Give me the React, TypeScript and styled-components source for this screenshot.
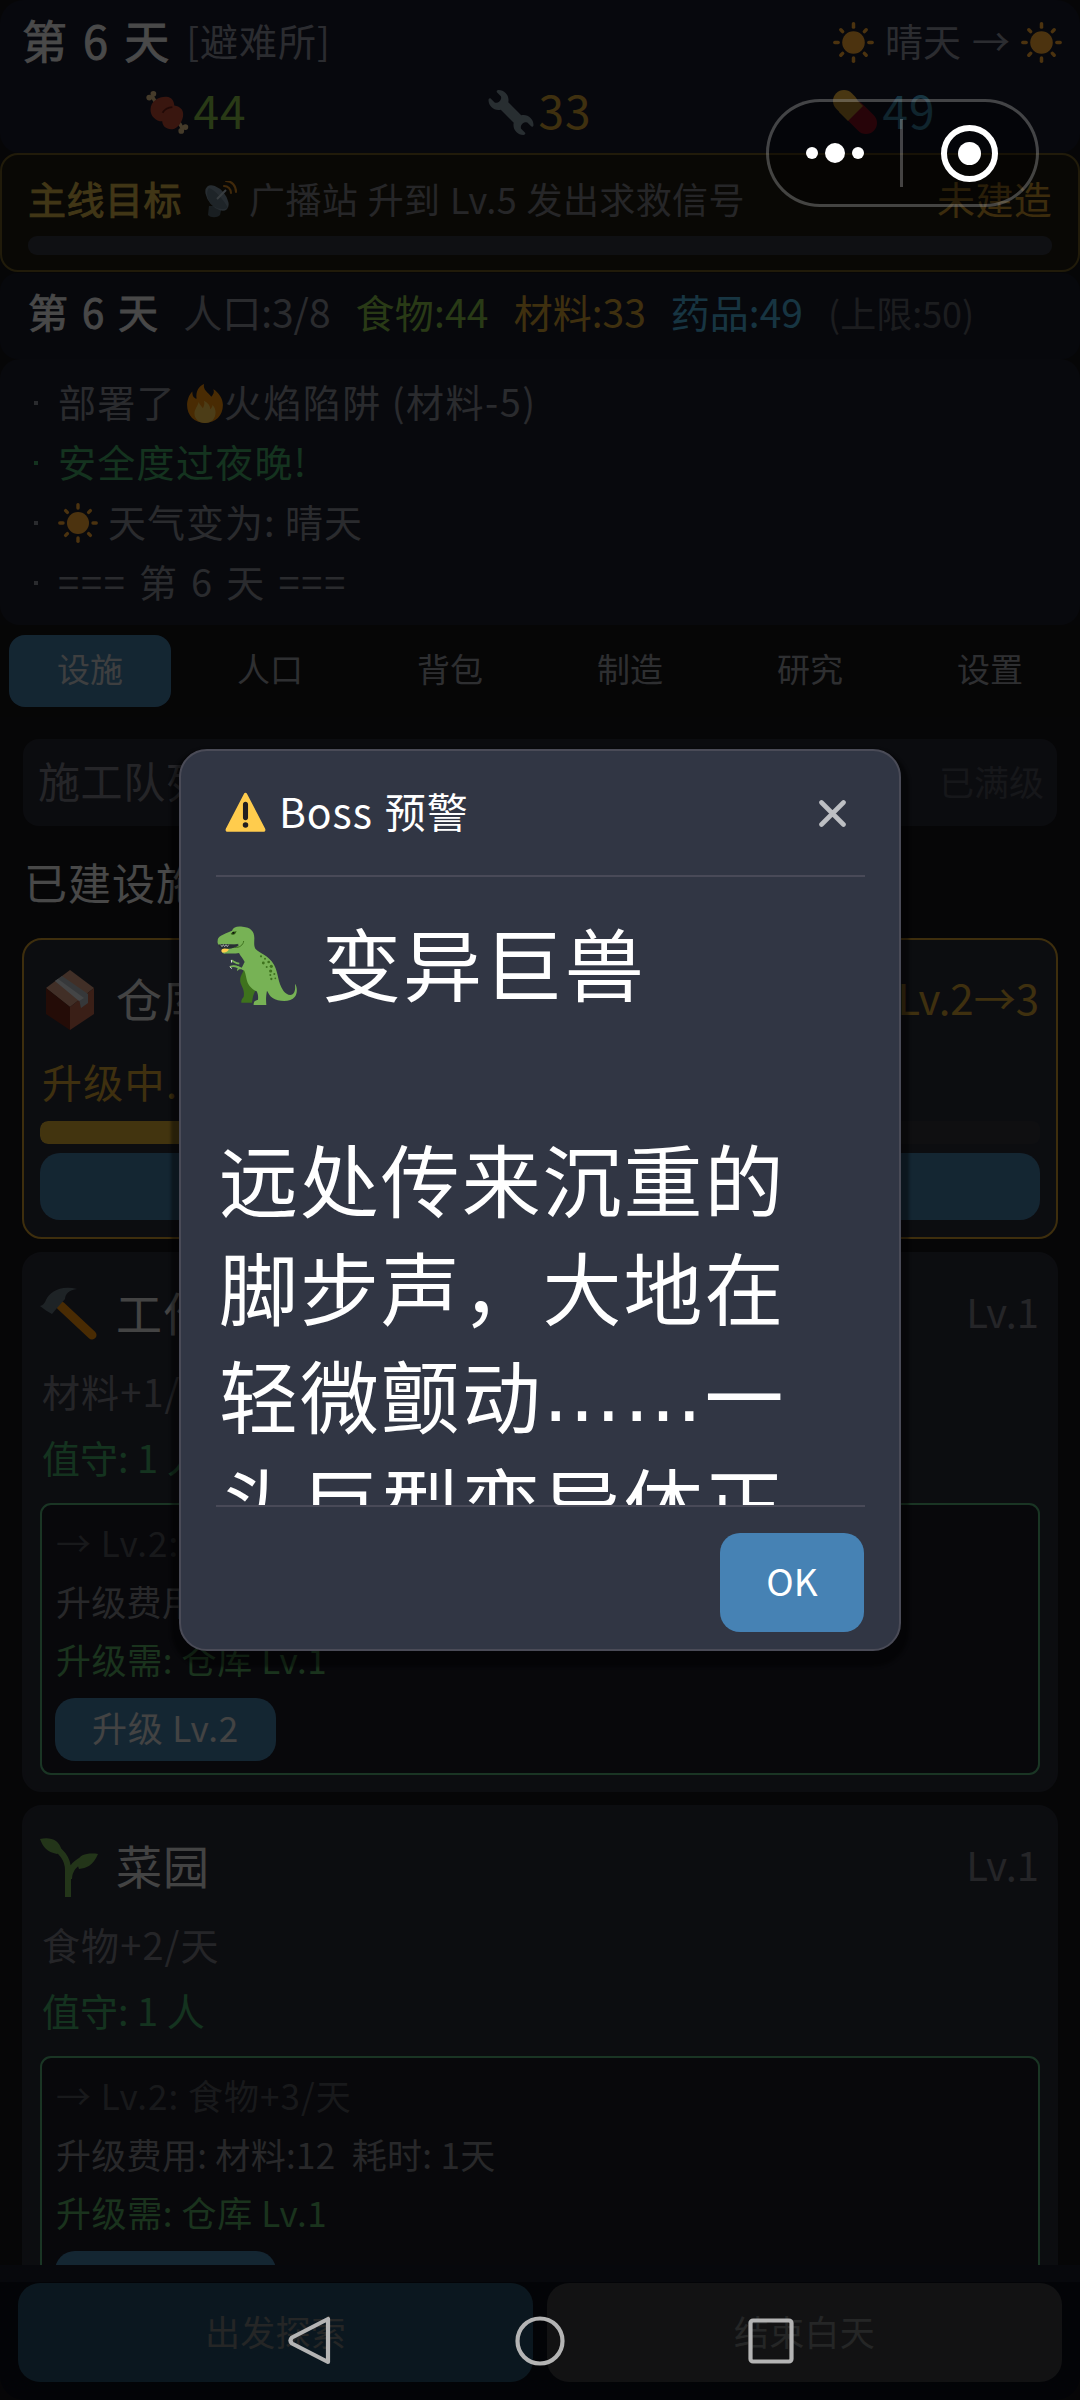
import React from "react";
import styled, { createGlobalStyle } from "styled-components";

const GlobalStyle = createGlobalStyle`
  * { box-sizing: border-box; }
  html, body { margin: 0; padding: 0; background: #000; }
  body { font-family: "Noto Sans CJK SC", "Noto Sans", sans-serif; }
`;

const Screen = styled.div`
  position: relative;
  width: 1080px;
  height: 2400px;
  overflow: hidden;
  display: flex;
  flex-direction: column;
  background: #161619;
`;

type TextProps = { $size?: number; $color?: string; $ls?: number; $ws?: number; $strong?: boolean };

const Text = styled.span<TextProps>`
  padding-bottom: 0.13em;
  font-size: ${(p) => p.$size ?? 38}px;
  color: ${(p) => p.$color ?? "#8c8f99"};
  letter-spacing: ${(p) => p.$ls ?? 0}px;
  word-spacing: ${(p) => p.$ws ?? 0}px;
  -webkit-text-stroke: ${(p) => (p.$strong ? "0.9px currentColor" : "0")};
  line-height: 1;
  white-space: pre;
`;

/* ---------- top bars ---------- */

const Header = styled.header`
  height: 153px;
  padding: 12px 18px 0 22px;
  border-radius: 24px 24px 20px 20px;
  background: #191c2d;
`;

const HeaderTop = styled.div`
  display: flex;
  align-items: center;
  justify-content: space-between;
  height: 60px;
`;

const Group = styled.div<{ $gap?: number; $ml?: number }>`
  display: flex;
  align-items: center;
  gap: ${(p) => p.$gap ?? 0}px;
  margin-left: ${(p) => p.$ml ?? 0}px;
`;

const Resources = styled.div`
  display: grid;
  grid-template-columns: repeat(3, 1fr);
  align-items: center;
  justify-items: center;
  height: 80px;
  padding: 0 6px 0 2px;
`;

const Goal = styled.section`
  display: flex;
  flex-direction: column;
  height: 119px;
  padding: 22px 26px 0 26px;
  border: 2px solid #6e5d22;
  border-radius: 18px;
  background: #211d12;
`;

const GoalRow = styled.div`
  display: flex;
  align-items: center;
  justify-content: space-between;
  height: 46px;
`;

const GoalTrack = styled.div`
  height: 19px;
  margin-top: 13px;
  border-radius: 9px;
  background: #333641;
`;

const StatusPanel = styled.section`
  display: flex;
  align-items: center;
  gap: 25px;
  height: 86px;
  margin-top: 1px;
  padding: 0 28px 4px;
  border-radius: 18px;
  background: #191b2b;
`;

const LogPanel = styled.section`
  height: 266px;
  padding: 14px 32px 0 32px;
  border-radius: 20px;
  background: #1d1f2c;
`;

const LogLine = styled.div`
  display: flex;
  align-items: center;
  height: 60px;
`;

const Bullet = styled.span<{ $color: string }>`
  flex: 0 0 4px;
  height: 4px;
  margin: 0 20px 0 2px;
  background: ${(p) => p.$color};
`;

/* ---------- tabs ---------- */

const Tabs = styled.nav`
  display: flex;
  height: 92px;
  padding-top: 10px;
  background: #141417;
`;

const Tab = styled.div<{ $active?: boolean }>`
  flex: 0 0 162px;
  height: 72px;
  margin: 0 9px;
  display: flex;
  align-items: center;
  justify-content: center;
  border-radius: 16px;
  background: ${(p) => (p.$active ? "#457fa9" : "transparent")};
`;

/* ---------- facilities ---------- */

const List = styled.main`
  height: 1548px;
  padding: 22px 22px 0;
  overflow: hidden;
`;

const QueueRow = styled.div`
  display: flex;
  align-items: center;
  justify-content: space-between;
  height: 87px;
  margin: 0 1px;
  padding: 0 13px 0 15px;
  border-radius: 16px;
  background: #272934;
`;

const SectionTitle = styled.div`
  display: flex;
  align-items: center;
  height: 112px;
  padding: 4px 0 0 2px;
`;

const Card = styled.section<{ $busy?: boolean }>`
  display: flex;
  flex-direction: column;
  height: ${(p) => (p.$busy ? 301 : 540)}px;
  margin-bottom: 13px;
  padding: 16px 16px 0;
  border: 2px solid ${(p) => (p.$busy ? "#cf9b2c" : "#2a2c38")};
  border-radius: 20px;
  background: #2a2c38;
`;

const CardHead = styled.div`
  display: flex;
  align-items: center;
  justify-content: space-between;
  flex: 0 0 88px;
  padding: 0 1px 0 0;
`;

const CardLine = styled.div<{ $h: number }>`
  display: flex;
  align-items: center;
  flex: 0 0 ${(p) => p.$h}px;
  padding: 4px 0 0 2px;
`;

const Track = styled.div`
  flex: 0 0 23px;
  margin: 1px 0 9px;
  border-radius: 8px;
  background: #32343b;
  overflow: hidden;
`;

const Fill = styled.div`
  height: 100%;
  border-radius: 8px;
  background: #dcae34;
`;

const WideButton = styled.div`
  flex: 0 0 67px;
  border-radius: 20px;
  background: #457fa9;
`;

const UpgradeBox = styled.div`
  flex: 0 0 272px;
  margin-top: 13px;
  padding: 10px 13px 0;
  border: 2px solid #57b37a;
  border-radius: 11px;
  background: #1b1c25;
`;

const UpgradeLine = styled.div`
  display: flex;
  align-items: center;
  height: 58.5px;
  padding-left: 1px;
`;

const SmallButton = styled.div`
  display: flex;
  align-items: center;
  justify-content: center;
  width: 221px;
  height: 63px;
  margin-top: 7px;
  border-radius: 20px;
  background: #457fa9;
`;

/* ---------- footer ---------- */

const Footer = styled.footer`
  display: flex;
  gap: 14px;
  height: 135px;
  padding: 18px 18px 0;
  border-radius: 0 0 24px 24px;
  background: linear-gradient(#191b2b 0 17px, #0c0e18 17px);
`;

const FooterButton = styled.div<{ $bg: string }>`
  flex: 1;
  height: 99px;
  display: flex;
  align-items: center;
  justify-content: center;
  border-radius: 22px;
  background: ${(p) => p.$bg};
`;

/* ---------- overlays ---------- */

const Mask = styled.div`
  position: absolute;
  inset: 0;
  display: flex;
  align-items: center;
  justify-content: center;
  background: rgba(0, 0, 0, 0.7);
`;

const Modal = styled.div`
  display: flex;
  flex-direction: column;
  width: 722px;
  height: 902px;
  padding: 0 34px 0 35px;
  border: 2px solid #4a4b57;
  border-radius: 28px;
  background: #313644;
  box-shadow: 0 8px 3px 8px rgba(0, 0, 0, 0.4);
`;

const ModalHead = styled.div`
  display: flex;
  align-items: center;
  justify-content: space-between;
  flex: 0 0 126px;
  padding: 0 19px 0 9px;
  border-bottom: 2px solid #494a58;
`;

const ModalBody = styled.div`
  flex: 0 0 628px;
  padding: 31px 0 0 3px;
  overflow: hidden;
`;

const BodyLine = styled.div`
  display: flex;
  align-items: center;
  height: 108px;
  font-size: 79px;
  letter-spacing: 1.9px;
  line-height: 108px;
  color: #fff;
  white-space: nowrap;
`;

const Ellipsis = styled.span`
  font-family: "DejaVu Sans", sans-serif;
`;

const ModalFoot = styled.div`
  display: flex;
  justify-content: flex-end;
  flex: 1;
  padding: 26px 1px 0 0;
  border-top: 2px solid #494a58;
`;

const OkButton = styled.div`
  display: flex;
  align-items: center;
  justify-content: center;
  width: 144px;
  height: 99px;
  border-radius: 20px;
  background: #4682b4;
`;

const Capsule = styled.div`
  position: absolute;
  top: 99px;
  left: 766px;
  width: 273px;
  height: 108px;
  display: flex;
  align-items: center;
  border: 3px solid rgba(255, 255, 255, 0.25);
  border-radius: 54px;
  background: rgba(0, 0, 0, 0.3);
`;

const CapsuleHalf = styled.div<{ $w: number }>`
  display: flex;
  align-items: center;
  justify-content: center;
  width: ${(p) => p.$w}px;
  gap: 7px;
`;

const Dot = styled.i<{ $d: number }>`
  width: ${(p) => p.$d}px;
  height: ${(p) => p.$d}px;
  border-radius: 50%;
  background: #fff;
`;

const CapsuleRule = styled.i`
  width: 3px;
  height: 68px;
  background: rgba(255, 255, 255, 0.25);
`;

const Ring = styled.div`
  display: flex;
  align-items: center;
  justify-content: center;
  width: 57px;
  height: 57px;
  border: 6px solid #fff;
  border-radius: 50%;
`;

const SystemNav = styled.div`
  position: absolute;
  left: 0;
  right: 0;
  bottom: 34px;
  height: 51px;
  display: flex;
  align-items: center;
  justify-content: center;
  gap: 183px;
`;

/* ---------- drawings ---------- */

type IconProps = { size: number };

const Sun = ({ size }: IconProps) => (
  <svg width={size} height={size} viewBox="0 0 40 40">
    <circle cx="20" cy="20" r="11" fill="#ffac33" />
    {[0, 45, 90, 135, 180, 225, 270, 315].map((a) => (
      <line key={a} x1="20" y1={a % 90 ? 2.5 : 1.8} x2="20" y2={a % 90 ? 5 : 5} stroke="#ffac33" strokeWidth="3.4" strokeLinecap="round" transform={`rotate(${a} 20 20)`} />
    ))}
  </svg>
);

const Meat = () => (
  <svg width="44" height="45" viewBox="12 12 136 142">
    <g stroke="#e8c78d" strokeWidth="11" strokeLinecap="round">
      <path d="M34 34 48 56M120 118l9 16" />
    </g>
    <g fill="#e8c78d">
      <circle cx="24" cy="36" r="9" /><circle cx="37" cy="24" r="9" /><circle cx="125" cy="141" r="9" /><circle cx="138" cy="129" r="9" />
    </g>
    <path fill="#bf4a34" d="M28 74C28 46 56 32 78 33c18 1 24 14 25 28 18 3 28 12 28 28 0 20-16 44-34 47-18 2-32-10-32-25C44 110 28 94 28 74z" />
    <path d="M66 84c8-14 18-17 31-18" fill="none" stroke="#6d1e16" strokeWidth="6" />
  </svg>
);

const Wrench = () => (
  <svg width="46" height="45" viewBox="0 0 36 36">
    <path fill="#8899a6" d="M27.989 19.977c-.622 0-1.225.078-1.806.213L15.811 9.818c.134-.581.212-1.184.212-1.806C16.023 3.587 12.436 0 8.012 0 7.11 0 5.91.916 6.909 1.915l2.997 2.997s.999 1.998-.999 3.995-3.996.998-3.996.998L1.915 6.909C.916 5.91 0 7.105 0 8.012c0 4.425 3.587 8.012 8.012 8.012.622 0 1.225-.078 1.806-.212l10.371 10.371c-.135.581-.213 1.184-.213 1.806 0 4.425 3.588 8.011 8.012 8.011.901 0 2.101-.916 1.102-1.915l-2.997-2.997s-.999-1.998.999-3.995 3.995-.999 3.995-.999l2.997 2.997c1 .999 1.916-.196 1.916-1.102 0-4.425-3.587-8.012-8.011-8.012z" />
  </svg>
);

const Pill = () => (
  <svg width="46" height="45" viewBox="0 0 46 45">
    <path d="M34 33 23 22" stroke="#be1931" strokeWidth="22" strokeLinecap="round" />
    <path d="M12 11l3 3" stroke="#f4b93f" strokeWidth="22" strokeLinecap="round" />
    <path d="m22 7 9 9-15 15-9-9z" fill="#f4b93f" />
  </svg>
);

const Dish = () => (
  <svg width="33" height="37" viewBox="0 0 33 37">
    <path d="M5 25h13l-2 9c-3 3-9 3-12 0z" fill="#546570" />
    <ellipse cx="13" cy="17" rx="8.5" ry="15" transform="rotate(-40 13 17)" fill="#8195a3" />
    <path d="M5 7c6 2 15 12 19 20-8 3-16-1-19-7S3 9 5 7z" fill="#657886" />
    <path d="m13 18 9-9" stroke="#bccbd6" strokeWidth="2" />
    <path d="M20 5c4 0 7 3 7 7M22 0c6 0 10 5 10 11" fill="none" stroke="#d98a24" strokeWidth="2" strokeLinecap="round" />
  </svg>
);

const Fire = () => (
  <svg width="38" height="39" viewBox="0 0 36 37">
    <path fill="#f4900c" d="M35 20c0 10-7 17-17 17S1 30 1 20c0-5 2-10 5-13 0 4 1 6 4 7-1-7 2-12 7-14-1 6 4 8 7 12 2-2 3-4 2-7 5 3 9 9 9 15z" />
    <path fill="#ffcc4d" d="M28 27c0 6-4 10-10 10S8 33 8 28c0-4 3-7 4-11 1 3 3 4 4 6 1-2 2-4 1-7 4 2 6 5 6 8 1-1 2-2 2-4 2 2 3 4 3 7z" />
  </svg>
);

const Package = () => (
  <svg width="48" height="60" viewBox="0 0 48 60">
    <path d="M24 0 48 18 24 37 0 18z" fill="#d99e82" />
    <path d="M0 18 24 37v23L0 44z" fill="#7a2a18" />
    <path d="M48 18 24 37v23l24-16z" fill="#c1694f" />
    <path d="M9 11 16 6l26 18v9l-7 5-2-9z" fill="#b4bcc2" />
    <path d="m9 11 3-2 26 19-5 3z" fill="#e3e8eb" />
  </svg>
);

const Hammer = () => (
  <svg width="58" height="54" viewBox="0 0 58 54">
    <path d="m21 19 31 29" stroke="#f4900c" strokeWidth="9" strokeLinecap="round" />
    <path d="M0 19c2 0 5-3 6-6C10 5 20-2 37 2c-8 1-12 5-12 10l-8 9-5 6c-4-2-8-5-12-8z" fill="#66757f" />
  </svg>
);

const Sprout = () => (
  <svg width="58" height="59" viewBox="0 0 58 59">
    <path d="M28 59V32C28 20 20 12 13 9M29 41c0-9 6-16 13-19" fill="none" stroke="#77b255" strokeWidth="6" />
    <path d="M0 1c10-2 19 0 22 12l-5 3C7 14 3 9 0 1zM58 16c-8-1-19-1-21 9l2 6c7-1 14-3 19-15z" fill="#77b255" />
  </svg>
);

const Warning = () => (
  <svg width="41" height="41" viewBox="0 0 36 36">
    <path fill="#ffcc4d" d="M2.653 35C.811 35-.001 33.662.847 32.027L16.456 1.972c.849-1.635 2.238-1.635 3.087 0l15.609 30.056c.85 1.634.037 2.972-1.805 2.972H2.653z" />
    <path fill="#231f20" d="M15.583 28.953a2.418 2.418 0 0 1 4.837 0 2.418 2.418 0 0 1-4.837 0zm.186-18.293c0-1.302.961-2.108 2.232-2.108 1.241 0 2.233.837 2.233 2.108v11.938c0 1.271-.992 2.108-2.233 2.108-1.271 0-2.232-.807-2.232-2.108V10.66z" />
  </svg>
);

const TRexSvg = styled.svg`
  flex: none;
  margin: 7px 25px 0 -2px;
`;

const TRex = () => (
  <TRexSvg width="80" height="80" viewBox="23 24 240 240">
    <path fill="#3e721d" d="M104 150c-2 18-14 22-11 42 2 12 14 22 10 44-4 6-8 9-7 18h32c3-20 4-28 14-40z" />
    <path fill="#77b255" d="M25 68c0-13 12-17 43-30 4-12 16-14 32-12 24 2 35 14 35 34 0 12-2 22 3 32 14 14 40 20 56 48 14 26 10 50 28 78 10 14 27 18 33 4 4-9 2-17 2-25 8 12 7 30-1 40-12 17-50 14-66 3-9-6-12-14-17-22-2 12-4 20-2 43h-38c-1-9 4-14 13-16 1-9 0-18-4-25-14-6-25-18-29-32-3-10-3-19-8-30-6-3-12-6-17-3-4 3-3 5-3 5-3-4-2-8 1-10-8-4-15-4-22-3 4-5 13-6 24-2l9 4c4-5 5-11 9-17-4-9-12-17-17-27-16 3-34 0-44 2-9-1-10-12-2-16 16 0 38 1 46-11-20 2-40-4-58 1-6-1-7-7-6-13z" />
    <path fill="#292f33" d="M28 80c14-3 36 3 59-3-6 13-24 15-47 16-8-2-12-7-12-13z" />
    <path fill="#ffcc4d" d="M38 94c4-4 12-3 20-1 0 8-12 12-20 10-3-3-2-6 0-9z" />
    <path d="M76 88c14 2 26-7 27-19" fill="none" stroke="#3e721d" strokeWidth="3" />
    <path d="m34 80 4 6 4-6 4 6 4-6 4 6 4-6" fill="none" stroke="#fff" strokeWidth="1.6" />
    <path d="M64 48c4-6 12-8 18-8l-5 8c-4 3-10 2-13 0z" fill="#2b5413" />
    <circle cx="72" cy="44" r="3" fill="#111" />
    <path d="M66 127c8 3 13 9 24 10M62 146c12-4 20-2 30 5" fill="none" stroke="#77b255" strokeWidth="5" />
    <path d="m66 126 1 8m-5 12 5 6" stroke="#ddd" strokeWidth="3" />
    <g fill="#3e721d">
      <circle cx="155" cy="115" r="3.2" /><circle cx="167" cy="122" r="3" /><circle cx="162" cy="135" r="4.2" /><circle cx="178" cy="132" r="4" />
      <circle cx="186" cy="145" r="4.8" /><circle cx="172" cy="147" r="3" /><circle cx="184" cy="159" r="4.8" /><circle cx="195" cy="168" r="3" />
      <circle cx="183" cy="171" r="3" /><circle cx="186" cy="183" r="3.4" /><circle cx="198" cy="181" r="2.6" />
    </g>
  </TRexSvg>
);

const Close = () => (
  <svg width="27" height="27" viewBox="0 0 27 27">
    <path d="m2.5 2.5 22 22m0-22-22 22" stroke="#bdbfc3" strokeWidth="4.6" strokeLinecap="round" />
  </svg>
);

/* ---------- data ---------- */

const GREEN = "#58aa62";
const LOG_GREEN = "#45aa68";
const GOLD = "#d3a233";
const tabs = ["设施", "人口", "背包", "制造", "研究", "设置"];

type Facility = { icon: React.ReactNode; name: string; output: string; next: string };

const facilities: Facility[] = [
  { icon: <Hammer />, name: "工作台", output: "材料+1/天", next: "→ Lv.2: 材料+2/天" },
  { icon: <Sprout />, name: "菜园", output: "食物+2/天", next: "→ Lv.2: 食物+3/天" },
];

const IconSlot = styled.div<{ $center?: boolean }>`
  display: flex;
  justify-content: ${(p) => (p.$center ? "center" : "flex-start")};
  width: 60px;
`;

const FacilityCard = ({ icon, name, output, next }: Facility) => (
  <Card>
    <CardHead>
      <Group $gap={16}>
        <IconSlot>{icon}</IconSlot>
        <Text $size={46} $ls={1} $color="#e2e2e2">{name}</Text>
      </Group>
      <Text $size={40} $color="#7d7e86">Lv.1</Text>
    </CardHead>
    <CardLine $h={66}><Text $ls={1.1} $color="#7d7e86">{output}</Text></CardLine>
    <CardLine $h={66}><Text $size={38} $color={LOG_GREEN}>值守: 1 人</Text></CardLine>
    <UpgradeBox>
      <UpgradeLine><Text $size={35} $ls={1} $color="#53545c">{next}</Text></UpgradeLine>
      <UpgradeLine><Text $size={35} $ls={0.3} $color="#85868d">{"升级费用: 材料:12  耗时: 1天"}</Text></UpgradeLine>
      <UpgradeLine><Text $size={35} $ls={0.6} $color={GREEN}>升级需: 仓库 Lv.1</Text></UpgradeLine>
      <SmallButton><Text $size={35} $ls={0.8} $color="#e0e0e0">升级 Lv.2</Text></SmallButton>
    </UpgradeBox>
  </Card>
);

export default function App() {
  return (
    <Screen>
      <GlobalStyle />
      <Header>
        <HeaderTop>
          <Group $gap={17}>
            <Text $size={45} $ws={6} $strong $color="#f5f5f5">第 6 天</Text>
            <Text $size={38} $ls={1} $color="#9093a0">[避难所]</Text>
          </Group>
          <Group $gap={11}>
            <Sun size={41} />
            <Text $size={38} $color="#9093a0">晴天</Text>
            <Text $size={38} $color="#9093a0">→</Text>
            <Sun size={41} />
          </Group>
        </HeaderTop>
        <Resources>
          <Group $gap={4}><Meat /><Text $size={46} $ls={1} $color="#8bc34a">44</Text></Group>
          <Group $gap={4}><Wrench /><Text $size={46} $ls={1} $color={GOLD}>33</Text></Group>
          <Group $gap={4}><Pill /><Text $size={46} $ls={1} $color="#4fb3dc">49</Text></Group>
        </Resources>
      </Header>

      <Goal>
        <GoalRow>
          <Group>
            <Text $size={38} $ls={0.5} $strong $color="#d9b64c">主线目标</Text>
            <Group $gap={12} $ml={22}>
              <Dish />
              <Text $size={36} $ls={0.4} $ws={1} $color="#7f8088">广播站 升到 Lv.5 发出求救信号</Text>
            </Group>
          </Group>
          <Text $size={38} $ls={0.3} $color="#c8952e">未建造</Text>
        </GoalRow>
        <GoalTrack />
      </Goal>

      <StatusPanel>
        <Text $size={40} $ws={5} $strong $color="#f0f0f0">第 6 天</Text>
        <Text $size={39} $color="#8c8f99">人口:3/8</Text>
        <Text $size={39} $ls={0.2} $color="#8bc34a">食物:44</Text>
        <Text $size={39} $color={GOLD}>材料:33</Text>
        <Text $size={39} $color="#4fb3dc">药品:49</Text>
        <Text $size={36} $color="#5f6169">(上限:50)</Text>
      </StatusPanel>

      <LogPanel>
        <LogLine>
          <Bullet $color="#8c8f99" />
          <Group>
            <Text $size={38} $ls={1.3}>{"部署了 "}</Text>
            <Fire />
            <Text $size={38} $ls={1.5}>火焰陷阱 (材料-5)</Text>
          </Group>
        </LogLine>
        <LogLine>
          <Bullet $color={LOG_GREEN} />
          <Text $size={38} $ls={1.3} $color={LOG_GREEN}>安全度过夜晚!</Text>
        </LogLine>
        <LogLine>
          <Bullet $color="#8c8f99" />
          <Group $gap={10}><Sun size={40} /><Text $size={38} $ls={1}>天气变为: 晴天</Text></Group>
        </LogLine>
        <LogLine>
          <Bullet $color="#8c8f99" />
          <Text $size={38} $ls={1.8} $ws={2}>=== 第 6 天 ===</Text>
        </LogLine>
      </LogPanel>

      <Tabs>
        {tabs.map((t, i) => (
          <Tab key={t} $active={i === 0}>
            <Text $size={33} $color={i === 0 ? "#d0d3d6" : "#9c9da3"}>{t}</Text>
          </Tab>
        ))}
      </Tabs>

      <List>
        <QueueRow>
          <Text $size={42} $ls={0.6} $color="#7d7e86">施工队列</Text>
          <Text $size={35} $color="#4c4e57">已满级</Text>
        </QueueRow>
        <SectionTitle>
          <Text $size={43} $ls={1} $color="#f0f0f0">已建设施</Text>
        </SectionTitle>
        <Card $busy>
          <CardHead>
            <Group $gap={16}>
              <IconSlot $center><Package /></IconSlot>
              <Text $size={46} $ls={1} $color="#e2e2e2">仓库</Text>
            </Group>
            <Text $size={42} $color={GOLD}>Lv.2→3</Text>
          </CardHead>
          <CardLine $h={76}><Text $size={40} $ls={1.3} $color={GOLD}>升级中...</Text></CardLine>
          <Track><Fill style={{ width: "50%" }} /></Track>
          <WideButton />
        </Card>
        {facilities.map((f) => (
          <FacilityCard key={f.name} {...f} />
        ))}
      </List>

      <Footer>
        <FooterButton $bg="#264f68"><Text $size={35} $ls={0.3} $color="#7d7f80">出发探索</Text></FooterButton>
        <FooterButton $bg="#3c3e42"><Text $size={35} $ls={0.3} $color="#7d7f80">结束白天</Text></FooterButton>
      </Footer>

      <Mask>
        <Modal>
          <ModalHead>
            <Group $gap={13}>
              <Warning />
              <Text $size={41} $ls={0.9} $color="#fff" $ws={2}>Boss 预警</Text>
            </Group>
            <Close />
          </ModalHead>
          <ModalBody>
            <BodyLine><TRex />变异巨兽</BodyLine>
            <BodyLine />
            <BodyLine>远处传来沉重的</BodyLine>
            <BodyLine>脚步声，大地在</BodyLine>
            <BodyLine>轻微颤动<Ellipsis>……</Ellipsis>一</BodyLine>
            <BodyLine>头巨型变异体正</BodyLine>
          </ModalBody>
          <ModalFoot>
            <OkButton><Text $size={37} $color="#fff">OK</Text></OkButton>
          </ModalFoot>
        </Modal>
      </Mask>

      <Capsule>
        <CapsuleHalf $w={131}><Dot $d={12} /><Dot $d={20} /><Dot $d={12} /></CapsuleHalf>
        <CapsuleRule />
        <CapsuleHalf $w={133}><Ring><Dot $d={23} /></Ring></CapsuleHalf>
      </Capsule>

      <SystemNav>
        <svg width="45" height="51" viewBox="0 0 45 51">
          <path d="M41 4v43L5 28.5q-3-3 0-6z" fill="none" stroke="#b4b4b4" strokeWidth="4.2" strokeLinejoin="round" />
        </svg>
        <svg width="50" height="50" viewBox="0 0 50 50">
          <circle cx="25" cy="25" r="22.5" fill="none" stroke="#b4b4b4" strokeWidth="4.2" />
        </svg>
        <svg width="46" height="46" viewBox="0 0 46 46">
          <rect x="2.500" y="2.500" width="41" height="41" rx="2.500" fill="none" stroke="#b4b4b4" strokeWidth="4.2" />
        </svg>
      </SystemNav>
    </Screen>
  );
}
